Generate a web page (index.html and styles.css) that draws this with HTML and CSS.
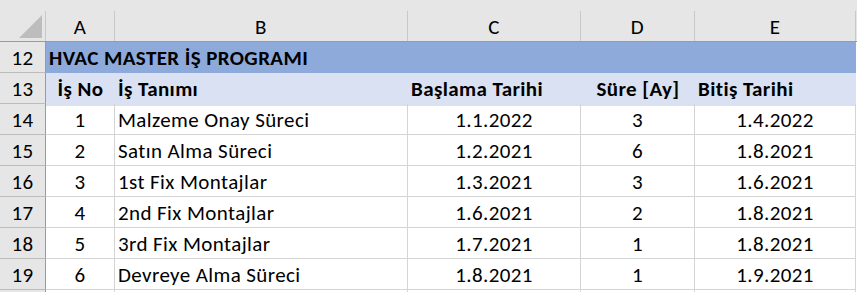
FILE: index.html
```html
<!DOCTYPE html>
<html lang="tr">
<head>
<meta charset="utf-8">
<link rel="stylesheet" href="styles.css">
</head>
<body>
<div class="sheet">
  <div class="colhead">
    <div class="corner"><span class="tri"></span></div>
    <div class="ch">A</div>
    <div class="ch">B</div>
    <div class="ch">C</div>
    <div class="ch">D</div>
    <div class="ch">E</div>
  </div>
  <div class="row">
    <div class="rn">12</div>
    <div class="title">HVAC MASTER İŞ PROGRAMI</div>
  </div>
  <div class="row">
    <div class="rn">13</div>
    <div class="hdr c">İş No</div>
    <div class="hdr l">İş Tanımı</div>
    <div class="hdr l">Başlama Tarihi</div>
    <div class="hdr c">Süre [Ay]</div>
    <div class="hdr l">Bitiş Tarihi</div>
  </div>
  <div class="row">
    <div class="rn">14</div>
    <div class="cell c">1</div>
    <div class="cell l">Malzeme Onay Süreci</div>
    <div class="cell c">1.1.2022</div>
    <div class="cell c">3</div>
    <div class="cell c">1.4.2022</div>
  </div>
  <div class="row">
    <div class="rn">15</div>
    <div class="cell c">2</div>
    <div class="cell l">Satın Alma Süreci</div>
    <div class="cell c">1.2.2021</div>
    <div class="cell c">6</div>
    <div class="cell c">1.8.2021</div>
  </div>
  <div class="row">
    <div class="rn">16</div>
    <div class="cell c">3</div>
    <div class="cell l">1st Fix Montajlar</div>
    <div class="cell c">1.3.2021</div>
    <div class="cell c">3</div>
    <div class="cell c">1.6.2021</div>
  </div>
  <div class="row">
    <div class="rn">17</div>
    <div class="cell c">4</div>
    <div class="cell l">2nd Fix Montajlar</div>
    <div class="cell c">1.6.2021</div>
    <div class="cell c">2</div>
    <div class="cell c">1.8.2021</div>
  </div>
  <div class="row">
    <div class="rn">18</div>
    <div class="cell c">5</div>
    <div class="cell l">3rd Fix Montajlar</div>
    <div class="cell c">1.7.2021</div>
    <div class="cell c">1</div>
    <div class="cell c">1.8.2021</div>
  </div>
  <div class="row">
    <div class="rn">19</div>
    <div class="cell c">6</div>
    <div class="cell l">Devreye Alma Süreci</div>
    <div class="cell c">1.8.2021</div>
    <div class="cell c">1</div>
    <div class="cell c">1.9.2021</div>
  </div>
  <div class="row last">
    <div class="rn"></div>
    <div class="cell"></div>
    <div class="cell"></div>
    <div class="cell"></div>
    <div class="cell"></div>
    <div class="cell"></div>
  </div>
</div>
</body>
</html>
```
FILE: styles.css
```css
html, body {
  margin: 0;
  padding: 0;
  background: #ffffff;
}
body {
  font-family: Carlito, Lato, "Liberation Sans", sans-serif;
  font-size: 21px;
  letter-spacing: 0.4px;
  color: #000;
  width: 857px;
  height: 292px;
  overflow: hidden;
}
.sheet {
  display: flex;
  flex-direction: column;
}
.colhead,
.row {
  display: grid;
  grid-template-columns: 46px 69px 293px 173px 114px 161px;
}
.colhead {
  background: #e6e6e6;
  padding-top: 11px;
  border-bottom: 1px solid #9b9b9b;
  width: 857px;
}
.corner {
  height: 30px;
  border-right: 1px solid #c8c8c8;
  position: relative;
}
.tri {
  position: absolute;
  right: 3px;
  bottom: 3px;
  width: 0;
  height: 0;
  border-style: solid;
  border-width: 0 0 23px 23px;
  border-color: transparent transparent #bdbdbd transparent;
}
.ch {
  height: 30px;
  line-height: 33px;
  text-align: center;
  border-right: 1px solid #c8c8c8;
  color: #000;
}
.row {
  height: 31px;
}
.rn {
  background: #e6e6e6;
  border-right: 1px solid #9b9b9b;
  border-bottom: 1px solid #bcbcbc;
  text-align: center;
  line-height: 33px;
  height: 30px;
}
.title {
  grid-column: 2 / 7;
  background: #8eaadb;
  font-weight: bold;
  line-height: 33px;
  padding-left: 3px;
  white-space: nowrap;
}
.hdr {
  background: #d9e1f2;
  font-weight: bold;
  line-height: 33px;
  white-space: nowrap;
}
.cell {
  border-right: 1px solid #d4d4d4;
  border-bottom: 1px solid #d4d4d4;
  line-height: 33px;
  height: 30px;
  white-space: nowrap;
}
.l {
  text-align: left;
  padding-left: 3px;
}
.c {
  text-align: center;
}
.row.last {
  height: 2px;
  overflow: hidden;
}
.last .rn,
.last .cell {
  border-bottom: none;
  height: 2px;
}
```
